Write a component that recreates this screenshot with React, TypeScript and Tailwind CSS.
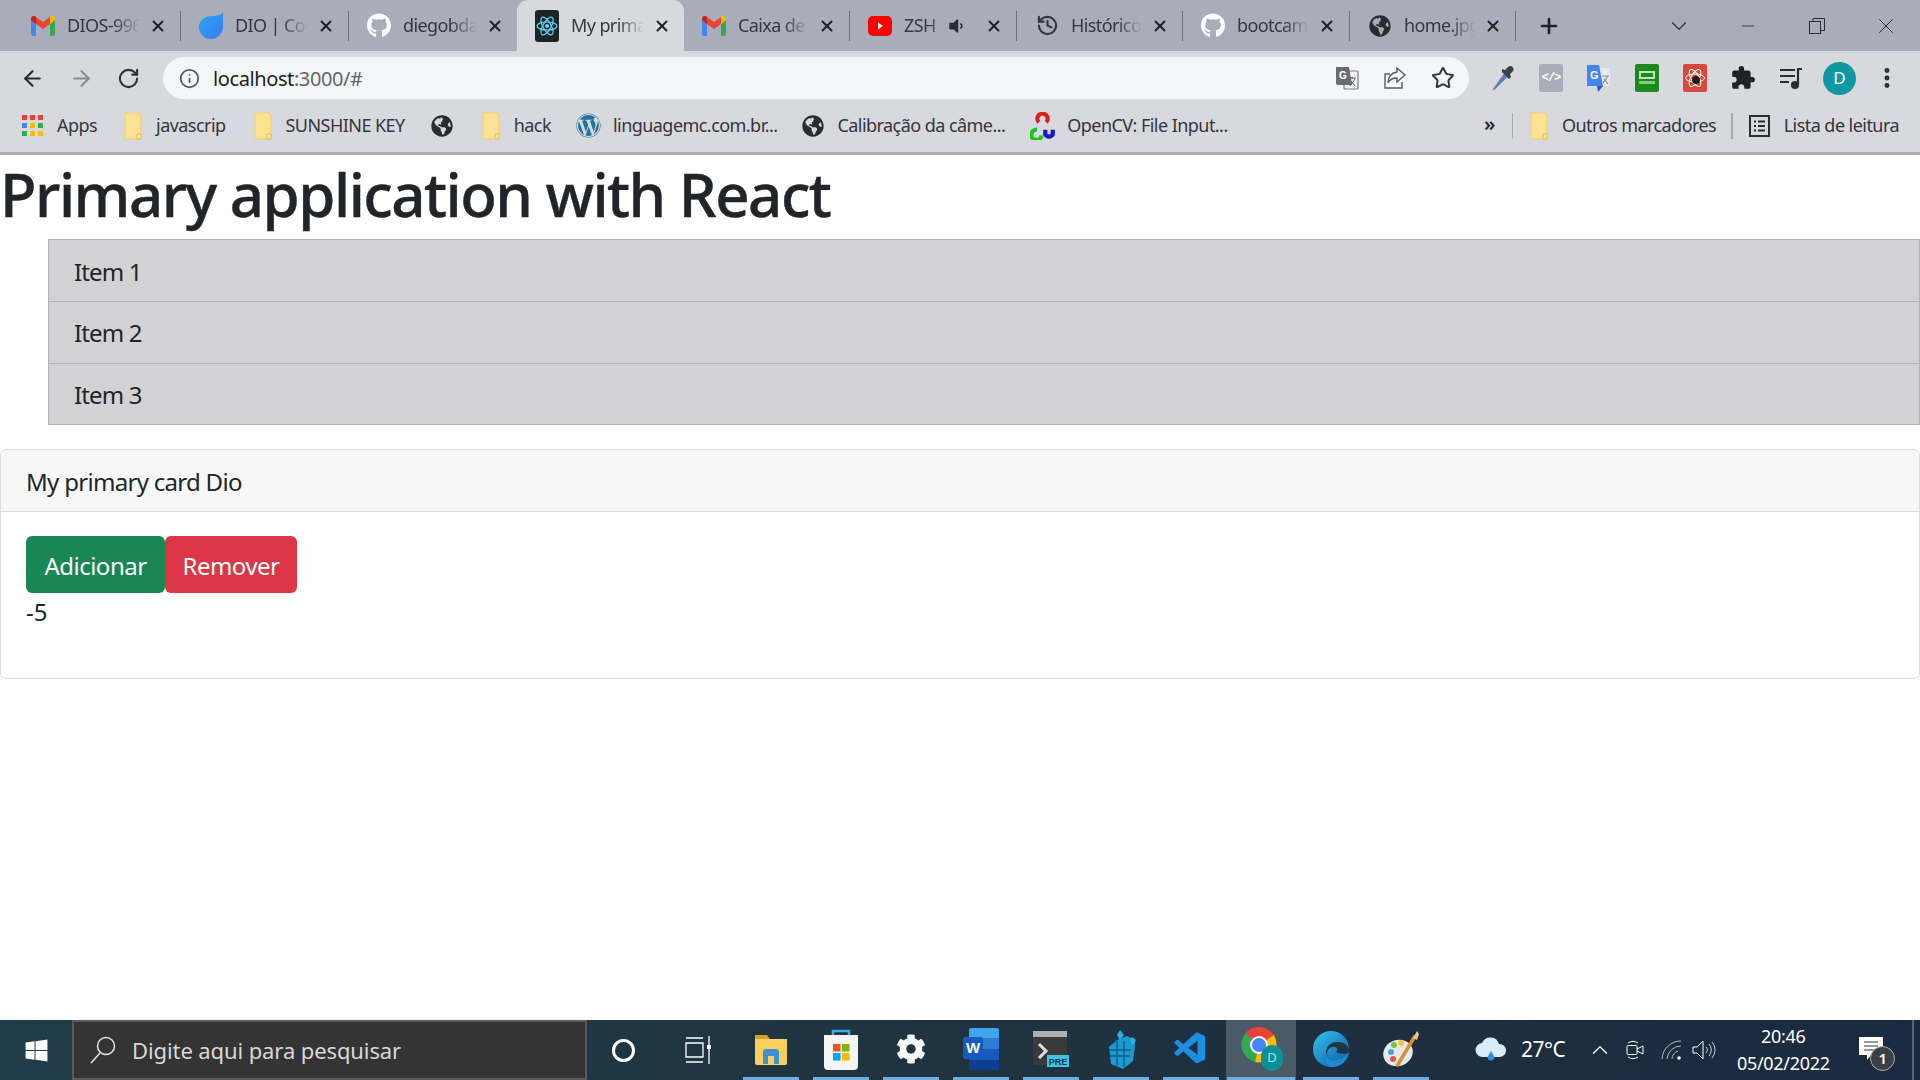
import React from "react";
import { ArrowLeft, ArrowRight, RotateCw, Info, X, Plus, Star, Minus, ChevronDown, ChevronUp, MoreVertical, History } from "lucide-react";
import { FaGithub, FaGlobeAmericas, FaWordpress, FaVolumeDown, FaWindows, FaCog } from "react-icons/fa";
import { MdExtension } from "react-icons/md";
import { VscVscode } from "react-icons/vsc";

const Gmail = () => (
  <svg width="24" height="20" viewBox="0 0 24 20" className="shrink-0">
    <path d="M0 3v15a2 2 0 0 0 2 2h3V8z" fill="#4285f4" />
    <path d="M24 3v15a2 2 0 0 1-2 2h-3V8z" fill="#34a853" />
    <path d="M5 8l7 5 7-5V1l-7 5-7-5z" fill="#ea4335" />
    <path d="M0 3c0-3 3-4 5-2v7L0 4z" fill="#c5221f" />
    <path d="M24 3c0-3-3-4-5-2v7l5-4z" fill="#fbbc04" />
  </svg>
);
const Dio = () => (
  <svg width="24" height="28" viewBox="0 0 24 28" className="shrink-0">
    <defs>
      <linearGradient id="dio" x1="0" y1="0" x2="1" y2="1">
        <stop offset="0" stopColor="#22a6f0" />
        <stop offset="1" stopColor="#3f7df0" />
      </linearGradient>
    </defs>
    <path d="M24 0v15a12 12 0 1 1-24 0C0 8 6 4 13 4c5 0 9-1 11-4z" fill="url(#dio)" />
  </svg>
);
const ReactLogo = () => (
  <svg width="24" height="32" viewBox="0 0 24 32" className="shrink-0">
    <rect width="24" height="32" rx="3" fill="#1c2428" />
    <g fill="none" stroke="#61dafb" strokeWidth="1.2">
      <ellipse cx="12" cy="16" rx="10" ry="4" />
      <ellipse cx="12" cy="16" rx="10" ry="4" transform="rotate(60 12 16)" />
      <ellipse cx="12" cy="16" rx="10" ry="4" transform="rotate(120 12 16)" />
    </g>
    <circle cx="12" cy="16" r="2" fill="#61dafb" />
  </svg>
);
const Youtube = () => (
  <svg width="24" height="20" viewBox="0 0 24 20" className="shrink-0">
    <rect width="24" height="20" rx="5" fill="#f00" />
    <path d="M10 6.500l5 3.500-5 3.500z" fill="#fff" />
  </svg>
);

const Tab = ({ icon, label, active, extra, w }: { icon: React.ReactNode; label: string; active?: boolean; extra?: React.ReactNode; w: string }) => (
  <div className={`flex items-center h-full shrink-0 pl-[18px] pr-[13px] ${w} ${active ? "bg-[#d8d9de] rounded-t-[11px]" : ""}`}>
    <div className="w-[24px] flex justify-center shrink-0">{icon}</div>
    <span className="ml-[12px] flex-1 overflow-hidden whitespace-nowrap text-[18px] tracking-[-0.6px] text-[#35383d] [mask-image:linear-gradient(to_right,black_60%,transparent_94%)]">
      {label}
    </span>
    {extra}
    <X size={18} strokeWidth={2.6} className="text-[#202124] shrink-0 ml-[4px]" />
  </div>
);
const Sep = () => <div className="w-[1.5px] h-[30px] bg-[#6e7076] shrink-0" />;

const Folder = () => (
  <svg width="18" height="28" viewBox="0 0 18 28" className="shrink-0">
    <path d="M1 1h14l2 3v23H1z" fill="#fde293" stroke="#f3cf6b" strokeWidth="1" />
    <path d="M13 27v-5h4v5z" fill="#fbe5a0" stroke="#e6bd4e" strokeWidth="1" />
  </svg>
);
const Apps = () => (
  <svg width="21" height="21" viewBox="0 0 21 21" className="shrink-0">
    {["#ea4335", "#ea4335", "#ea4335", "#4285f4", "#fbbc04", "#34a853", "#34a853", "#fbbc04", "#fbbc04"].map((c, i) => (
      <rect key={i} x={(i % 3) * 8} y={Math.floor(i / 3) * 8} width="5" height="5" fill={c} />
    ))}
  </svg>
);
const OpenCv = () => (
  <svg width="25" height="28" viewBox="0 0 26 30" className="shrink-0">
    <path d="M9 11a5.500 5.500 0 1 1 8 0" fill="none" stroke="#e01c1c" strokeWidth="4.5" />
    <path d="M7 19a5.500 5.500 0 1 0 5 6" fill="none" stroke="#18c918" strokeWidth="4.5" />
    <path d="M16 19v5a4.500 4.500 0 0 0 8 0v-5" fill="none" stroke="#1616d0" strokeWidth="4.5" />
  </svg>
);
const Bookmark = ({ icon, label, cls = "" }: { icon: React.ReactNode; label?: string; cls?: string }) => (
  <div className={`flex items-center shrink-0 ${cls}`}>
    {icon}
    {label && <span className="text-[18px] text-[#33363a] tracking-[-0.55px] whitespace-nowrap">{label}</span>}
  </div>
);

const Translate = () => (
  <svg width="24" height="24" viewBox="0 0 24 24" className="shrink-0">
    <rect x="9" y="5" width="14" height="18" rx="1" fill="#f3f4f6" stroke="#77797e" strokeWidth="1.2" />
    <path d="M1 1h13l3 18H3a2 2 0 0 1-2-2z" fill="#6a6c70" />
    <text x="4" y="13" fontSize="10" fontWeight="700" fill="#fff" fontFamily="Liberation Sans">G</text>
    <path d="M14 12h7M17 11v2M20 13l-5 7M16 15l4 5" stroke="#55575b" strokeWidth="1" fill="none" />
  </svg>
);
const ShareIcon = () => (
  <svg width="24" height="24" viewBox="0 0 24 24" fill="none" stroke="#5a5c61" strokeWidth="1.4" className="shrink-0">
    <path d="M7 8H2v14h17v-6" />
    <path d="M14 2l8 7-8 7v-4c-4 0-7 1-9 5 0-6 3-10 9-11z" />
  </svg>
);
const ExtBox = ({ bg, children }: { bg: string; children: React.ReactNode }) => (
  <div className={`w-[24px] h-[28px] rounded-[2px] flex items-center justify-center ${bg}`}>{children}</div>
);
const Slot = ({ w, children }: { w: string; children: React.ReactNode }) => (
  <div className={`flex justify-center items-center shrink-0 ${w}`}>{children}</div>
);

const TaskApp = ({ children, active }: { children: React.ReactNode; active?: boolean }) => (
  <div className={`w-[70px] h-full shrink-0 flex flex-col items-center ${active ? "bg-[#4a5a66]" : ""}`}>
    <div className="flex-1 flex items-center justify-center">{children}</div>
    <div className={`h-[3px] bg-[#6fafe0] ${active ? "w-[68px]" : "w-[56px]"}`} />
  </div>
);

const items = [
  { t: "Item 1", c: "h-[63px] pt-[2px]" },
  { t: "Item 2", c: "h-[62px] border-t-0 pt-[1px]" },
  { t: "Item 3", c: "h-[61px] border-t-0 pt-[2px]" },
];

export default function App() {
  return (
    <div className="w-[1920px] h-[1080px] flex flex-col bg-white overflow-hidden font-['Noto_Sans','Open_Sans',sans-serif]">
      {/* tab strip */}
      <div className="h-[51px] shrink-0 bg-[#a9adb9] flex items-center pl-[13px]">
        <Tab icon={<Gmail />} label="DIOS-996" w="w-[166.5px]" />
        <Sep />
        <Tab icon={<Dio />} label="DIO | Cou" w="w-[166.5px]" />
        <Sep />
        <Tab icon={<FaGithub size={25} color="#fff" />} label="diegobdav" w="w-[168px]" />
        <Tab active icon={<ReactLogo />} label="My primary" w="w-[167px]" />
        <Tab icon={<Gmail />} label="Caixa de e" w="w-[164.5px]" />
        <Sep />
        <Tab icon={<Youtube />} label="ZSH" w="w-[165.5px]" extra={<FaVolumeDown size={18} color="#2b2d30" className="mr-[16px] shrink-0" />} />
        <Sep />
        <Tab icon={<History size={23} strokeWidth={2.2} color="#33363b" />} label="Histórico" w="w-[164.5px]" />
        <Sep />
        <Tab icon={<FaGithub size={25} color="#fff" />} label="bootcamp" w="w-[165.5px]" />
        <Sep />
        <Tab icon={<FaGlobeAmericas size={22} color="#2a2c30" />} label="home.jpg" w="w-[164.5px]" />
        <Sep />
        <Plus size={24} strokeWidth={2.6} className="text-[#202124] ml-[21px] shrink-0" />
        <div className="ml-auto flex items-center h-full">
          <Slot w="w-[69px]"><ChevronDown size={26} strokeWidth={1} className="text-[#2b2d30]" /></Slot>
          <Slot w="w-[70px]"><Minus size={20} strokeWidth={1} className="text-[#2b2d30]" /></Slot>
          <Slot w="w-[68px]">
            <svg width="16" height="16" viewBox="0 0 16 16" fill="none" stroke="#2b2d30" strokeWidth="1"><rect x="0.500" y="3.500" width="11" height="12" /><path d="M4 3.500V.5h11.500v12h-4" /></svg>
          </Slot>
          <Slot w="w-[69px]"><X size={26} strokeWidth={0.9} className="text-[#2b2d30]" /></Slot>
        </div>
      </div>

      {/* toolbar */}
      <div className="h-[52px] shrink-0 bg-[#d8d9de] flex items-center pt-[2px]">
        <Slot w="w-[65px]"><ArrowLeft size={25} strokeWidth={2} className="text-[#2a2c30]" /></Slot>
        <Slot w="w-[33px]"><ArrowRight size={25} strokeWidth={2} className="text-[#8a8c92]" /></Slot>
        <Slot w="w-[60px]"><RotateCw size={23} strokeWidth={2.2} className="text-[#2f3135]" /></Slot>
        <div className="ml-[5px] w-[1306px] h-[42px] rounded-full bg-[#f5f6f8] flex items-center shrink-0">
          <Info size={21} strokeWidth={2} className="ml-[16px] text-[#55575b]" />
          <span className="ml-[13px] pt-[1px] text-[20px] tracking-[-0.4px] text-[#202124]">localhost<span className="text-[#63656a]">:3000/#</span></span>
          <div className="ml-auto flex items-center gap-[24px] pr-[14px]">
            <Translate />
            <ShareIcon />
            <Star size={24} strokeWidth={2} className="text-[#33363b]" />
          </div>
        </div>
        <div className="flex items-center gap-[24px] pl-[22px]">
          <svg width="24" height="26" viewBox="0 0 24 26" className="shrink-0">
            <path d="M3 23l-1 2 2-1L16 12l-3-3z" fill="#4a7fd0" stroke="#8a8d94" strokeWidth="1" />
            <path d="M11 7l7 7 2-2-1-3 3-3c2-3-2-7-5-4l-3 3-3-1z" fill="#3c3f44" />
          </svg>
          <ExtBox bg="bg-[#a9adb9]"><span className="text-white text-[12px] font-bold font-['Liberation_Mono',monospace] tracking-[-1px]">&lt;/&gt;</span></ExtBox>
          <svg width="24" height="28" viewBox="0 0 24 28" className="shrink-0">
            <path d="M10 4h13v18H10z" fill="#e8e9ec" />
            <path d="M0 1h12l4 21H0z" fill="#4285f4" />
            <path d="M10 22h6l-5 6z" fill="#2a56c6" />
            <text x="3" y="15" fontSize="11" fontWeight="700" fill="#fff" fontFamily="Liberation Sans">G</text>
            <path d="M15 12h7M21 12l-5 7M17 15l4 5" stroke="#8a8c92" strokeWidth="1.2" fill="none" />
          </svg>
          <ExtBox bg="bg-[#1d8a1d]">
            <svg width="20" height="18" viewBox="0 0 20 18"><rect x="2" y="2" width="16" height="8" fill="#bfe6bf" /><rect x="4" y="4" width="12" height="4" fill="#1d8a1d" /><rect x="2" y="12" width="16" height="3" fill="#7fce7f" /></svg>
          </ExtBox>
          <ExtBox bg="bg-[#d8493a]">
            <svg width="22" height="24" viewBox="0 0 22 24" fill="none" stroke="#fff" strokeWidth="1"><ellipse cx="11" cy="12" rx="9.500" ry="4" /><ellipse cx="11" cy="12" rx="9.500" ry="4" transform="rotate(60 11 12)" /><ellipse cx="11" cy="12" rx="9.500" ry="4" transform="rotate(120 11 12)" /><circle cx="12" cy="14" r="4" fill="#1c1c1c" stroke="none" /></svg>
          </ExtBox>
          <MdExtension size={26} color="#202124" className="shrink-0 -mx-[1px]" />
          <svg width="24" height="24" viewBox="0 0 24 24" fill="none" stroke="#2a2c30" strokeWidth="2.200" className="shrink-0">
            <path d="M1 4h15M1 10h15M1 16h9" />
            <path d="M19 19V3h4" />
            <circle cx="16" cy="19" r="3" fill="#2a2c30" />
          </svg>
          <div className="w-[33px] h-[33px] rounded-full bg-[#0f97a3] flex items-center justify-center text-white text-[17px] shrink-0 -ml-[4px] -mr-[6px]">D</div>
          <MoreVertical size={26} strokeWidth={2.6} className="text-[#2a2c30] shrink-0" />
        </div>
      </div>

      {/* bookmarks */}
      <div className="h-[49px] shrink-0 bg-[#d8d9de] flex items-center pl-[22px] pr-[21px] pb-[4px]">
        <Bookmark icon={<Apps />} label="Apps" cls="gap-[14px]" />
        <Bookmark icon={<Folder />} label="javascrip" cls="ml-[27px] gap-[14px]" />
        <Bookmark icon={<Folder />} label="SUNSHINE KEY" cls="ml-[28px] gap-[14px]" />
        <Bookmark icon={<FaGlobeAmericas size={22} color="#2a2c30" />} cls="ml-[26px]" />
        <Bookmark icon={<Folder />} label="hack" cls="ml-[29px] gap-[14px]" />
        <Bookmark icon={<FaWordpress size={25} color="#21759b" />} label="linguagemc.com.br..." cls="ml-[25px] gap-[12px]" />
        <Bookmark icon={<FaGlobeAmericas size={22} color="#2a2c30" />} label="Calibração da câme..." cls="ml-[25px] gap-[13px]" />
        <Bookmark icon={<OpenCv />} label="OpenCV: File Input..." cls="ml-[25px] gap-[12px]" />
        <span className="ml-auto text-[20px] font-semibold text-[#2a2c30] leading-none pb-[4px]">»</span>
        <div className="w-[1.5px] h-[26px] bg-[#a9abb0] ml-[16px]" />
        <Bookmark icon={<Folder />} label="Outros marcadores" cls="ml-[17px] gap-[14px]" />
        <div className="w-[1.5px] h-[26px] bg-[#a9abb0] ml-[15px]" />
        <Bookmark
          cls="ml-[16px] gap-[14px]"
          icon={
            <svg width="21" height="22" viewBox="0 0 21 22" fill="none" stroke="#2a2c30" strokeWidth="2"><rect x="1" y="1" width="19" height="20" /><path d="M5 6.500h2M9 6.500h7M5 11h2M9 11h7M5 15.500h2M9 15.500h7" /></svg>
          }
          label="Lista de leitura"
        />
      </div>
      <div className="h-[3px] shrink-0 bg-[#a9abb0]" />

      {/* page */}
      <div className="flex-1 min-h-0 text-[#212529]">
        <h1 className="h-[72px] pt-[3px] text-[60px] leading-[72px] font-medium mb-[12px] tracking-[-1.52px] [-webkit-text-stroke:0.4px_#212529] whitespace-nowrap">Primary application with React</h1>
        <ul className="pl-[48px] mb-[24px]">
          {items.map((it) => (
            <li key={it.t} className={`bg-[#d2d2d4] border border-[#b4b4b6] pl-[25px] flex items-center text-[24px] tracking-[-0.85px] ${it.c}`}>
              {it.t}
            </li>
          ))}
        </ul>
        <div className="border border-[#dcdcdc] rounded-[6px] h-[230px]">
          <div className="h-[62px] bg-[#f7f7f7] border-b border-[#dcdcdc] pl-[25px] pt-[3px] flex items-center text-[24px] tracking-[-0.7px] rounded-t-[6px]">My primary card Dio</div>
          <div className="px-[25px] pt-[24px]">
            <div className="flex">
              <button className="h-[57px] w-[139px] pt-[3px] rounded-[6px] bg-[#198754] text-white text-[24px] tracking-[-0.5px]">Adicionar</button>
              <button className="h-[57px] w-[132px] pt-[3px] rounded-[6px] bg-[#dc3545] text-white text-[24px] tracking-[-0.5px]">Remover</button>
            </div>
            <div className="text-[24px] leading-[36px] pt-[1px]">-5</div>
          </div>
        </div>
      </div>

      {/* taskbar */}
      <div className="h-[60px] shrink-0 bg-linear-to-r from-[#203b49] via-[#1f3340] to-[#1b2a40] flex items-stretch text-white">
        <Slot w="w-[72px]"><FaWindows size={25} color="#fff" /></Slot>
        <div className="w-[515px] bg-[#343434] border-2 border-[#5a5a5a] flex items-center shrink-0">
          <svg width="28" height="28" viewBox="0 0 28 28" fill="none" stroke="#e5e5e5" strokeWidth="1.500" className="ml-[15px] shrink-0">
            <circle cx="17" cy="10" r="8.500" />
            <path d="M11 17L2 27" />
          </svg>
          <span className="ml-[15px] text-[22px] tracking-[-0.1px] text-[#d8d8d8]">Digite aqui para pesquisar</span>
        </div>
        <Slot w="w-[72px]"><div className="w-[23px] h-[23px] rounded-full border-[3px] border-white" /></Slot>
        <Slot w="w-[77px]">
          <svg width="26" height="30" viewBox="0 0 26 30" fill="none" stroke="#fff" strokeWidth="1.3">
            <path d="M1 3h17M1 27h17M1 8h17v14H1zM24 1v28" />
            <rect x="22" y="10" width="4" height="4" fill="#fff" stroke="none" />
          </svg>
        </Slot>
        <TaskApp>
          <svg width="32" height="34" viewBox="0 0 32 34"><path d="M0 3h12l3 4h-15z" fill="#d4a01e" /><path d="M0 7h32v24a2 2 0 0 1-2 2H2a2 2 0 0 1-2-2z" fill="#fbcf5b" /><path d="M8 32V20a3 3 0 0 1 3-3h10a3 3 0 0 1 3 3v12h-5v-8h-6v8z" fill="#3d8fd6" /></svg>
        </TaskApp>
        <TaskApp>
          <svg width="36" height="42" viewBox="0 0 36 42"><path d="M10 9V3h16v6" fill="none" stroke="#38aee0" strokeWidth="2.500" /><path d="M1 7h34v31a4 4 0 0 1-4 4H5a4 4 0 0 1-4-4z" fill="#f5f5f5" /><rect x="10" y="16" width="7.500" height="7.500" fill="#e9542e" /><rect x="19" y="16" width="7.500" height="7.500" fill="#7bb500" /><rect x="10" y="25" width="7.500" height="7.500" fill="#00a4ef" /><rect x="19" y="25" width="7.500" height="7.500" fill="#ffb900" /></svg>
        </TaskApp>
        <TaskApp><FaCog size={30} color="#fff" /></TaskApp>
        <TaskApp>
          <svg width="36" height="44" viewBox="0 0 36 44"><path d="M8 1h26a2 2 0 0 1 2 2v8H6V3a2 2 0 0 1 2-2z" fill="#41a5ee" /><rect x="6" y="11" width="30" height="11" fill="#2b7cd3" /><rect x="6" y="22" width="30" height="11" fill="#185abd" /><path d="M6 33h30v8a2 2 0 0 1-2 2H8a2 2 0 0 1-2-2z" fill="#103f91" /><rect y="10" width="20" height="22" rx="2" fill="#185abd" /><text x="10" y="26" fontSize="15" fontWeight="700" fill="#fff" textAnchor="middle" fontFamily="Liberation Sans">W</text></svg>
        </TaskApp>
        <TaskApp>
          <svg width="36" height="36" viewBox="0 0 36 36"><rect width="34" height="34" rx="2" fill="#3a3a3a" /><rect width="34" height="6" fill="#b0b0b0" /><path d="M6 13l7 7-7 7" fill="none" stroke="#ddd" strokeWidth="3" /><rect x="14" y="24" width="22" height="12" fill="#3fc4e8" /><text x="25" y="34" fontSize="9" fontWeight="700" fill="#14333f" textAnchor="middle" fontFamily="Liberation Sans">PRE</text></svg>
        </TaskApp>
        <TaskApp>
          <svg width="32" height="40" viewBox="0 0 32 40"><path d="M12 11l10-4 8 4v6l-2 15-10 8-12-5L4 18z" fill="#1a9ad1" /><path d="M15 1l4 5-4 5-3-5zM27 8l4 3-3 5-3-4z" fill="#2bb0e6" /><path d="M4 21h22M5 27h20M12 12v26M19 12v26" stroke="#0c5e85" strokeWidth="1.400" /></svg>
        </TaskApp>
        <TaskApp>
          <VscVscode size={38} color="#1e8fe0" />
        </TaskApp>
        <TaskApp active>
          <div className="relative w-[40px] h-[44px]">
            <svg width="36" height="36" viewBox="0 0 36 36" className="absolute left-0 top-0">
              <path d="M18 18L4.500 6A18 18 0 0 1 33 8z" fill="#ea4335" />
              <path d="M18 18L4.500 6A18 18 0 0 0 14 35z" fill="#34a853" />
              <path d="M18 18L33 8a18 18 0 0 1-19 27z" fill="#fbbc04" />
              <circle cx="18" cy="18" r="8" fill="#4285f4" stroke="#fff" strokeWidth="2" />
            </svg>
            <div className="absolute right-[-2px] bottom-0 w-[22px] h-[26px] rounded-full bg-[#0f8f97] flex items-center justify-center text-[13px] text-[#9ee]">D</div>
          </div>
        </TaskApp>
        <TaskApp>
          <svg width="36" height="36" viewBox="0 0 36 36"><defs><linearGradient id="edge" x1="0" y1="0" x2="1" y2="1"><stop offset="0" stopColor="#35c1f1" /><stop offset="1" stopColor="#0c59a4" /></linearGradient></defs><circle cx="18" cy="18" r="18" fill="url(#edge)" /><path d="M36 20c0-5-5-9-11-9-8 0-12 5-12 10s5 9 10 8c-3 2-8 0-9-5 0-6 4-9 8-8 3 1 3 4 1 5 3 2 13 3 13-1z" fill="#1f3340" /><path d="M13 21c0 6 5 9 10 8 5 0 10-3 13-8-1 9-9 15-17 15-6 0-8-8-6-15z" fill="#1b8ad0" /></svg>
        </TaskApp>
        <TaskApp>
          <svg width="36" height="38" viewBox="0 0 36 38"><ellipse cx="15" cy="23" rx="15" ry="13" fill="#e8e8e8" transform="rotate(-20 15 23)" /><circle cx="8" cy="22" r="3" fill="#4aa3df" /><circle cx="11" cy="15" r="3" fill="#7cc24a" /><circle cx="18" cy="13" r="3" fill="#f2c53d" /><circle cx="10" cy="29" r="3" fill="#e05b4b" /><path d="M14 36L32 6" stroke="#d9902f" strokeWidth="3.500" /><path d="M30 8l4-7 2 3-2 6z" fill="#e9c98d" /></svg>
        </TaskApp>
        <div className="flex-1 flex items-center pl-[39px] relative">
          <svg width="32" height="28" viewBox="0 0 32 28" className="shrink-0"><path d="M8 21a7 7 0 0 1-1-14 9 9 0 0 1 17 1 6.500 6.500 0 0 1 1 13z" fill="#d8ecfa" /><path d="M16 15l3.500 6a3.500 3.500 0 1 1-7 0z" fill="#2f8fd6" /></svg>
          <span className="ml-[14px] text-[21px] tracking-[-0.5px] text-white">27°C</span>
          <ChevronUp size={26} strokeWidth={1.2} className="ml-[22px] text-white shrink-0" />
          <svg width="18" height="24" viewBox="0 0 18 24" fill="none" stroke="#fff" strokeWidth="1" className="ml-[13px] shrink-0">
            <path d="M2 5a9 9 0 0 1 10 0M2 19a9 9 0 0 0 10 0" />
            <rect x="1" y="7.500" width="10" height="9" rx="1" />
            <path d="M11 11l6-3v8l-6-3" />
          </svg>
          <svg width="22" height="22" viewBox="0 0 22 22" fill="none" stroke="#b4bbc2" strokeWidth="1" className="ml-[17px] shrink-0">
            <path d="M1 20A19 19 0 0 1 20 2M6 20A14 14 0 0 1 20 7M11 20a9 9 0 0 1 6-8" />
            <circle cx="18" cy="19" r="1.800" fill="#fff" stroke="none" />
          </svg>
          <svg width="24" height="22" viewBox="0 0 24 22" fill="none" stroke="#fff" strokeWidth="1" className="ml-[9px] shrink-0">
            <path d="M1 8h4l6-6v18l-6-6H1z" />
            <path d="M14 8a4 4 0 0 1 0 6M17 5a9 9 0 0 1 0 12M20 3a12 12 0 0 1 0 16" stroke="#c8cdd2" />
          </svg>
          <div className="w-[110px] ml-[12px] flex flex-col items-center text-[18px] leading-[27px] tracking-[-0.3px] text-white shrink-0">
            <span>20:46</span>
            <span>05/02/2022</span>
          </div>
          <div className="relative ml-[21px] w-[26px] h-[26px] shrink-0">
            <svg width="26" height="26" viewBox="0 0 26 26"><path d="M0 0h24v18H12l-4 5v-5H0z" fill="#fff" /><path d="M5 5h14M5 9h14M5 13h14" stroke="#333" strokeWidth="1.200" /></svg>
            <div className="absolute left-[11px] top-[9px] w-[25px] h-[25px] rounded-full bg-[#3c4046] border border-[#aaa] flex items-center justify-center text-[15px] font-semibold">1</div>
          </div>
          <div className="absolute right-[6px] top-0 h-full w-[2px] bg-[#5a6570]" />
        </div>
      </div>
    </div>
  );
}
